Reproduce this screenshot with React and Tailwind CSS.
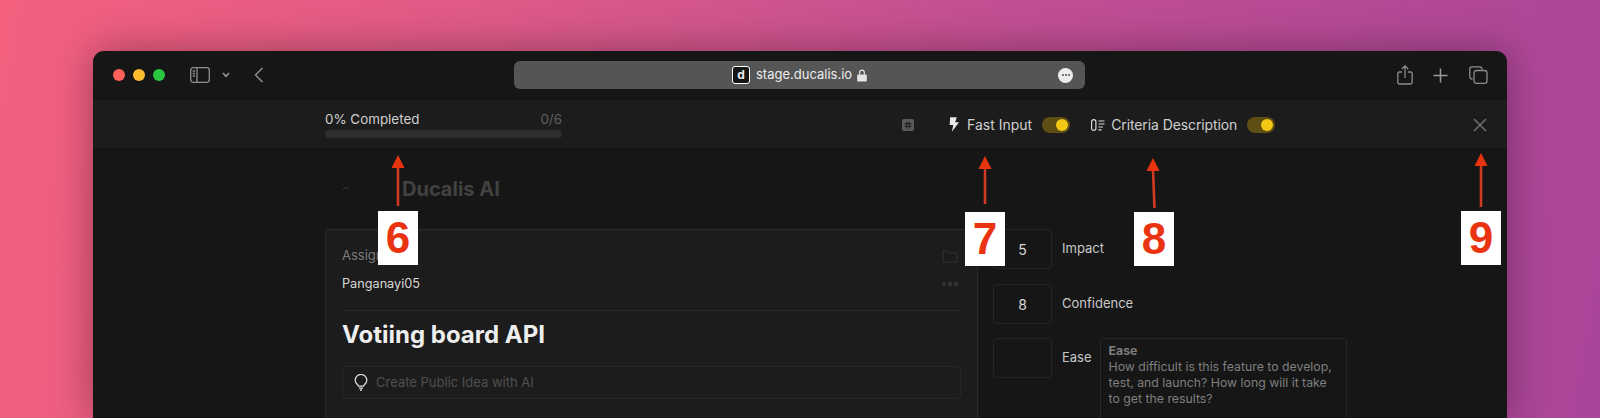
import React from "react";

function Arrow({ className, tail = 51, lean = 0 }) {
  return (
    <svg className={`absolute ${className}`} width="16" height="56" viewBox="0 0 16 56" fill="none">
      <path d={`M8 12L${8 + lean} ${tail}`} stroke="#cf3a22" strokeWidth="2.6" />
      <path d="M8 0L14.5 13H1.5Z" fill="#e8330f" />
    </svg>
  );
}

function NumberBox({ className, children }) {
  return (
    <div className={`absolute w-[40px] h-[54px] bg-white flex items-center justify-center text-[#ea3311] text-[44px] font-bold font-['Liberation_Sans',Arial,sans-serif] ${className}`}>
      {children}
    </div>
  );
}

function Toggle() {
  return (
    <div className="w-[28px] h-[16px] rounded-full bg-[#5e4e13] flex items-center justify-end pr-[2px]">
      <div className="w-[12px] h-[12px] rounded-full bg-[#f2c813]" />
    </div>
  );
}

function ScoreRow({ value, label, className = "" }) {
  return (
    <div className={`flex items-center ${className}`}>
      <div className="w-[59px] h-[40px] rounded-[4px] border border-[#252525] flex items-center justify-center text-[14px] text-[#d8d8d8]">
        {value}
      </div>
      <span className="ml-[10px] text-[13px] text-[#c8c8c8]">{label}</span>
    </div>
  );
}

export default function App() {
  return (
    <div className="relative w-[1600px] h-[418px] overflow-hidden pt-[51px] pl-[93px] bg-[linear-gradient(100deg,#f4607e_0%,#de5a88_30%,#c24f92_60%,#a94599_100%)] font-['Inter','Liberation_Sans',sans-serif]">
      <div className="w-[1414px] h-[367px] rounded-t-[11px] bg-[#161616] overflow-hidden shadow-[0_0_40px_rgba(0,0,0,0.35)] flex flex-col">
        {/* Browser title bar */}
        <div className="h-[49px] shrink-0 flex items-center pl-[20px] pr-[19px] pb-[1px]">
          <div className="flex items-center gap-[8px]">
            <div className="w-[12px] h-[12px] rounded-full bg-[#fb605b]" />
            <div className="w-[12px] h-[12px] rounded-full bg-[#fbbc2e]" />
            <div className="w-[12px] h-[12px] rounded-full bg-[#29c740]" />
          </div>
          <svg className="ml-[25px]" width="20" height="16" viewBox="0 0 20 16" fill="none" stroke="#8f8f8f" strokeWidth="1.3">
            <rect x="0.7" y="0.7" width="18.6" height="14.6" rx="2.5" />
            <path d="M7 1V15" />
            <path d="M2.7 4H5M2.7 6.5H5M2.7 9H5" />
          </svg>
          <svg className="ml-[12px]" width="8" height="6" viewBox="0 0 8 6" fill="none" stroke="#9a9a9a" strokeWidth="1.5">
            <path d="M1 1L4 4.3L7 1" />
          </svg>
          <svg className="ml-[24px]" width="10" height="16" viewBox="0 0 10 16" fill="none" stroke="#8f8f8f" strokeWidth="1.5">
            <path d="M8.5 1L1.5 8L8.5 15" />
          </svg>
          <div className="ml-[250px] w-[571px] h-[28px] rounded-[6px] bg-[#555555] flex items-center pl-[218px] pr-[12px]">
            <div className="w-[18px] h-[18px] rounded-[3px] bg-[#161616] border border-white flex items-center justify-center text-[12px] font-bold leading-none text-[#eeeeee]">
              d
            </div>
            <span className="ml-[6px] text-[13px] text-[#ececec]">stage.ducalis.io</span>
            <svg className="ml-[5px]" width="10" height="13" viewBox="0 0 10 13" fill="#e6e6e6">
              <path d="M1.2 5.5H8.8A1 1 0 0 1 9.8 6.5V11.5A1 1 0 0 1 8.8 12.5H1.2A1 1 0 0 1 .2 11.5V6.5A1 1 0 0 1 1.2 5.5Z" />
              <path d="M2.7 5.5V3.4A2.3 2.3 0 0 1 7.3 3.4V5.5" fill="none" stroke="#e6e6e6" strokeWidth="1.2" />
            </svg>
            <div className="ml-auto w-[15px] h-[15px] rounded-full bg-[#ececec] flex items-center justify-center gap-[1px]">
              <div className="w-[2px] h-[2px] rounded-full bg-[#555555]" />
              <div className="w-[2px] h-[2px] rounded-full bg-[#555555]" />
              <div className="w-[2px] h-[2px] rounded-full bg-[#555555]" />
            </div>
          </div>
          <div className="ml-auto flex items-center">
            <svg width="16" height="20" viewBox="0 0 16 20" fill="none" stroke="#8c8c8c" strokeWidth="1.3">
              <path d="M5 7H2.5A1.7 1.7 0 0 0 .8 8.7V17.3A1.7 1.7 0 0 0 2.5 19H13.5A1.7 1.7 0 0 0 15.2 17.3V8.7A1.7 1.7 0 0 0 13.5 7H11" />
              <path d="M8 13V1M4.8 4L8 1L11.2 4" />
            </svg>
            <svg className="ml-[20px]" width="15" height="15" viewBox="0 0 15 15" fill="none" stroke="#9a9a9a" strokeWidth="1.5">
              <path d="M7.5 0.5V14.5M0.5 7.5H14.5" />
            </svg>
            <svg className="ml-[21px]" width="19" height="18" viewBox="0 0 19 18" fill="none" stroke="#8c8c8c" strokeWidth="1.3">
              <path d="M3.5 13H3A2.2 2.2 0 0 1 .8 10.8V3A2.2 2.2 0 0 1 3 .8H10.8A2.2 2.2 0 0 1 13 3V3.5" />
              <rect x="5" y="4.5" width="13" height="12.8" rx="2.4" />
            </svg>
          </div>
        </div>

        {/* App toolbar */}
        <div className="h-[48px] shrink-0 bg-[#1c1c1c] flex items-center pl-[232px] pr-[20px]">
          <div className="w-[237px]">
            <div className="flex items-center justify-between h-[16px] text-[13.4px] leading-[16px]">
              <span className="text-[#cfcfcf]">0% Completed</span>
              <span className="text-[#5f5f5f]">0/6</span>
            </div>
            <div className="mt-[3px] h-[8px] rounded-full bg-[#2e2e2e]" />
          </div>
          <div className="flex-1 flex items-center mt-[1px]">
            <div className="ml-[340px] w-[12px] h-[12px] rounded-[2px] bg-[#5a5a5a] flex items-center justify-center">
              <svg width="8" height="8" viewBox="0 0 8 8" fill="none" stroke="#1c1c1c" strokeWidth="1">
                <path d="M2.7 .5V7.5M5.3 .5V7.5M.5 2.7H7.5M.5 5.3H7.5" />
              </svg>
            </div>
            <svg className="ml-[35px]" width="10" height="15" viewBox="0 0 9 13" fill="#e8e8e8">
              <path d="M1 0H7L5.6 4.5H9L2.6 13L3.8 7H0.6Z" />
            </svg>
            <span className="ml-[8px] text-[14px] text-[#cfcfcf]">Fast Input</span>
            <div className="ml-[10px]"><Toggle /></div>
            <svg className="ml-[21px]" width="14" height="12" viewBox="0 0 14 12" fill="none" stroke="#dcdcdc" strokeWidth="1.2">
              <rect x="0.6" y="0.6" width="4.3" height="10.8" rx="2.1" />
              <path d="M7.5 2H13.5M7.5 5H13.5M7.5 8H12M7.5 10.8H10.5" />
            </svg>
            <span className="ml-[6px] text-[14px] tracking-[-0.1px] text-[#cfcfcf]">Criteria Description</span>
            <div className="ml-[10px]"><Toggle /></div>
            <svg className="ml-auto" width="14" height="14" viewBox="0 0 14 14" fill="none" stroke="#707070" strokeWidth="1.5">
              <path d="M1 1L13 13M13 1L1 13" />
            </svg>
          </div>
        </div>

        {/* Content */}
        <div className="flex-1 flex pl-[232px] overflow-hidden">
          <div className="w-[653px] shrink-0 flex flex-col">
            <div className="h-[81px] shrink-0 flex items-center">
              <svg className="ml-[17px]" width="8" height="5" viewBox="0 0 8 5" fill="none" stroke="#3a3a3a" strokeWidth="1">
                <path d="M1 4L4 1L7 4" />
              </svg>
              <span className="ml-[52px] text-[20px] font-bold text-[#424242]">Ducalis AI</span>
            </div>
            <div className="flex-1 bg-[#1c1c1c] border-l border-t border-r border-[#2a2a2a] rounded-tl-[4px] pl-[16px] pr-[16px] pt-[18px]">
              <div className="flex justify-between items-center h-[16px]">
                <span className="text-[13px] text-[#7a7a7a]">Assignee</span>
                <svg className="mr-[3px]" width="16" height="13" viewBox="0 0 16 13" fill="none" stroke="#333333" strokeWidth="1">
                  <path d="M1 2V12H15V3H7L5.5 1H1Z" />
                </svg>
              </div>
              <div className="mt-[12px] flex justify-between items-center h-[16px]">
                <span className="text-[12.7px] text-[#d8d8d8]">Panganayi05</span>
                <span className="mr-[3px] flex gap-[2px]">
                  <span className="w-[4px] h-[4px] rounded-full bg-[#333333]" />
                  <span className="w-[4px] h-[4px] bg-[#333333]" />
                  <span className="w-[4px] h-[4px] bg-[#333333]" />
                </span>
              </div>
              <div className="mt-[18px] h-px bg-[#2a2a2a]" />
              <div className="mt-[6px] h-[36px] flex items-center text-[24px] font-bold text-[#eeeeee]">Votiing board API</div>
              <div className="mt-[13px] h-[33px] rounded-[4px] border border-[#272727] flex items-center pl-[11px]">
                <svg width="14" height="17" viewBox="0 0 14 17" fill="none" stroke="#dcdcdc" strokeWidth="1.3">
                  <path d="M4.5 12.2C4.3 10.8 1.2 9.5 1.2 6.2A5.8 5.8 0 0 1 12.8 6.2C12.8 9.5 9.7 10.8 9.5 12.2Z" />
                  <path d="M5 14.2H9M6 16H8" />
                </svg>
                <span className="ml-[8px] text-[13px] text-[#505050]">Create Public Idea with AI</span>
              </div>
            </div>
          </div>
          <div className="flex-1 pl-[15px] pt-[81px]">
            <ScoreRow value="5" label="Impact" />
            <ScoreRow value="8" label="Confidence" className="mt-[15px]" />
            <div className="mt-[14px] flex items-start">
              <ScoreRow value="" label="Ease" />
              <div className="ml-[8px] w-[247px] h-[120px] rounded-[4px] border border-[#272727] pl-[8px] pr-[8px] pt-[4px] text-[12.3px] leading-[16px] text-[#7f7f7f]">
                <div className="font-bold">Ease</div>
                <div>How difficult is this feature to develop, test, and launch? How long will it take to get the results?</div>
              </div>
            </div>
          </div>
        </div>
      </div>

      {/* Callouts */}
      <Arrow className="left-[390px] top-[155px]" />
      <NumberBox className="left-[378px] top-[211px]">6</NumberBox>
      <Arrow className="left-[977px] top-[156px]" tail={48} />
      <NumberBox className="left-[965px] top-[212px]">7</NumberBox>
      <Arrow className="left-[1145px] top-[158px]" tail={50} lean={1.5} />
      <NumberBox className="left-[1134px] top-[212px]">8</NumberBox>
      <Arrow className="left-[1473px] top-[153px]" tail={54} />
      <NumberBox className="left-[1461px] top-[211px]">9</NumberBox>
    </div>
  );
}
